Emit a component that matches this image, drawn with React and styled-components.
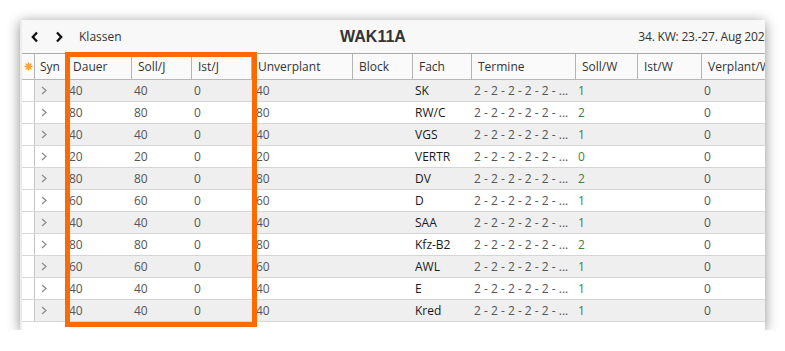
import React from 'react';
import styled, { createGlobalStyle } from 'styled-components';

const GlobalStyle = createGlobalStyle`
  body {
    margin: 0;
    background: #ffffff;
    font-family: "Segoe UI", "Open Sans", "Noto Sans", sans-serif;
  }
`;

const COLS = '13px 32px 65px 60px 60px 101px 60px 59px 104px 62px 64px 90px';

const rows = [
  ['40', '40', '0', '40', '', 'SK', '1', '', '0'],
  ['80', '80', '0', '80', '', 'RW/C', '2', '', '0'],
  ['40', '40', '0', '40', '', 'VGS', '1', '', '0'],
  ['20', '20', '0', '20', '', 'VERTR', '0', '', '0'],
  ['80', '80', '0', '80', '', 'DV', '2', '', '0'],
  ['60', '60', '0', '60', '', 'D', '1', '', '0'],
  ['40', '40', '0', '40', '', 'SAA', '1', '', '0'],
  ['80', '80', '0', '80', '', 'Kfz-B2', '2', '', '0'],
  ['60', '60', '0', '60', '', 'AWL', '1', '', '0'],
  ['40', '40', '0', '40', '', 'E', '1', '', '0'],
  ['40', '40', '0', '40', '', 'Kred', '1', '', '0'],
];

const headers = ['Dauer', 'Soll/J', 'Ist/J', 'Unverplant', 'Block', 'Fach', 'Termine', 'Soll/W', 'Ist/W', 'Verplant/W'];

const Page = styled.div`
  padding: 20px 0 0 20px;
`;

const Window = styled.div`
  width: 745px;
  height: 310px;
  background: #fafafa;
  border-left: 2px solid #ececec;
  box-sizing: border-box;
  box-shadow: 0 2px 12px rgba(0, 0, 0, 0.45);
  overflow: hidden;
  display: flex;
  flex-direction: column;
`;

const Toolbar = styled.div`
  height: 33px;
  flex: none;
  display: flex;
  align-items: center;
  background: #f8f8f8;
  padding-left: 1px;
`;

const NavButton = styled.div`
  width: 24px;
  height: 20px;
  display: flex;
  align-items: center;
  justify-content: center;
`;

const Crumb = styled.span`
  margin-left: 8px;
  font-size: 12px;
  color: #333;
`;

const Title = styled.div`
  flex: 1;
  text-align: center;
  font-family: "Liberation Sans", Arial, sans-serif;
  font-weight: bold;
  font-size: 16px;
  color: #333;
  padding-right: 14px;
`;

const WeekInfo = styled.div`
  flex: none;
  font-size: 12px;
  color: #333;
  white-space: nowrap;
  letter-spacing: -0.2px;
  margin-right: -6px;
`;

const Grid = styled.div`
  position: relative;
  flex: 1;
  background: #ffffff;
`;

const HeaderRow = styled.div`
  display: grid;
  grid-template-columns: ${COLS};
  height: 27px;
  box-sizing: border-box;
  border-top: 1px solid #a9a9a9;
  border-bottom: 1px solid #b8b8b8;
  background: #fafafa;
`;

const HeadCell = styled.div`
  display: flex;
  align-items: center;
  padding-left: ${p => p.$pad || 6}px;
  border-right: 1px solid #b4b4b4;
  font-size: 12px;
  color: #333;
  white-space: nowrap;
  overflow: hidden;
`;

const Row = styled.div`
  display: grid;
  grid-template-columns: ${COLS};
  height: 22px;
  box-sizing: border-box;
  border-bottom: 1px solid #d6d6d6;
  background: ${p => (p.$odd ? '#efefef' : '#ffffff')};
`;

const Cell = styled.div`
  display: flex;
  align-items: center;
  padding-left: ${p => p.$pad ?? 2}px;
  font-size: 12px;
  color: ${p => p.$color || '#555'};
  white-space: nowrap;
  overflow: hidden;
`;

const Indicator = styled.div`
  background: #ffffff;
  border-right: 1px solid #c4c4c4;
`;

const Highlight = styled.div`
  position: absolute;
  left: 43px;
  top: -1px;
  width: 192px;
  height: 275px;
  box-sizing: border-box;
  border: 5px solid #ff6a00;
  pointer-events: none;
`;

const Chevron = ({ dir, color = '#111', w = 2.3 }) => (
  <svg width="8" height="12" viewBox="0 0 8 12">
    <path
      d={dir === 'left' ? 'M6 1.5 L1.8 6 L6 10.5' : 'M2 1.5 L6.2 6 L2 10.5'}
      fill="none"
      stroke={color}
      strokeWidth={w}
    />
  </svg>
);

const SmallChevron = () => (
  <svg width="6" height="9" viewBox="0 0 6 9">
    <path d="M1 1 L5 4.5 L1 8" fill="none" stroke="#8a8a8a" strokeWidth="1.2" />
  </svg>
);

const Star = () => (
  <svg width="9" height="9" viewBox="0 0 9 9">
    <g stroke="#ff8a1e" strokeWidth="1.2">
      <line x1="4.5" y1="0.5" x2="4.5" y2="8.5" />
      <line x1="0.5" y1="4.5" x2="8.5" y2="4.5" />
      <line x1="1.7" y1="1.7" x2="7.3" y2="7.3" />
      <line x1="7.3" y1="1.7" x2="1.7" y2="7.3" />
    </g>
    <circle cx="4.5" cy="4.5" r="2.3" fill="#ffa040" />
  </svg>
);

export default function App() {
  return (
    <Page>
      <GlobalStyle />
      <Window>
        <Toolbar>
          <NavButton><Chevron dir="left" /></NavButton>
          <NavButton><Chevron dir="right" /></NavButton>
          <Crumb>Klassen</Crumb>
          <Title>WAK11A</Title>
          <WeekInfo>34. KW: 23.-27. Aug 2021</WeekInfo>
        </Toolbar>
        <Grid>
          <HeaderRow>
            <HeadCell $pad={2}><Star /></HeadCell>
            <HeadCell $pad={5}>Syn</HeadCell>
            {headers.map(h => (
              <HeadCell key={h}>{h}</HeadCell>
            ))}
          </HeaderRow>
          {rows.map((r, i) => (
            <Row key={i} $odd={i % 2 === 0}>
              <Indicator />
              <Cell $pad={6}><SmallChevron /></Cell>
              <Cell>{r[0]}</Cell>
              <Cell>{r[1]}</Cell>
              <Cell>{r[2]}</Cell>
              <Cell $pad={4}>{r[3]}</Cell>
              <Cell>{r[4]}</Cell>
              <Cell $color="#1a1a1a">{r[5]}</Cell>
              <Cell>2 - 2 - 2 - 2 - 2 - ...</Cell>
              <Cell $color="#3f803f">{r[6]}</Cell>
              <Cell>{r[7]}</Cell>
              <Cell>{r[8]}</Cell>
            </Row>
          ))}
          <Highlight />
        </Grid>
      </Window>
    </Page>
  );
}
